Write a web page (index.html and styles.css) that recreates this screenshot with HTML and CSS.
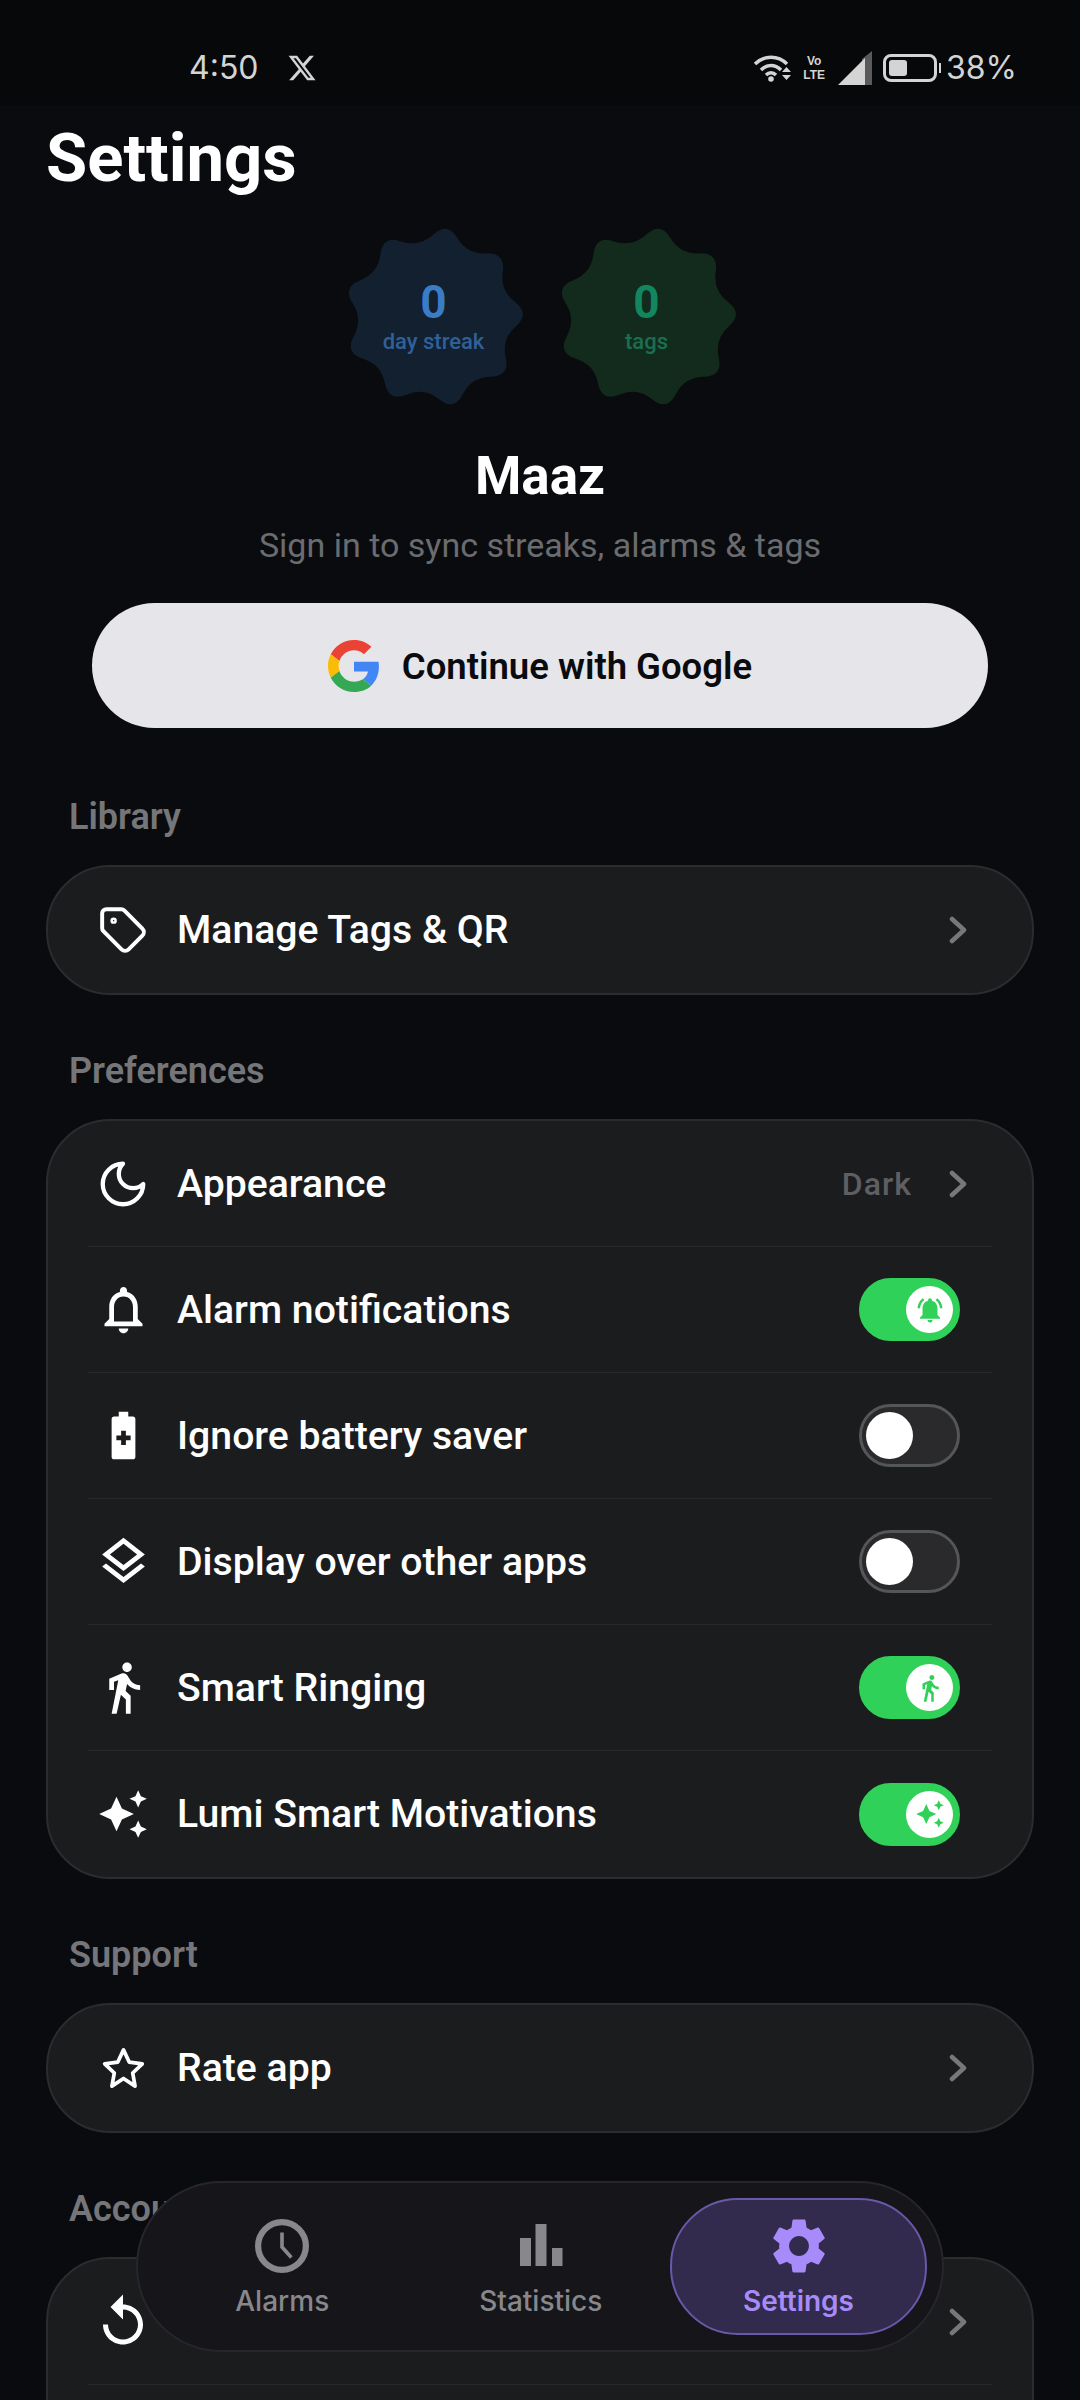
FILE: index.html
```html
<!DOCTYPE html>
<html lang="en">
<head>
    <meta charset="UTF-8">
    <meta name="viewport" content="width=device-width, initial-scale=1.0">
    <title>Settings</title>
    <link rel="stylesheet" href="styles.css">
</head>
<body>
    <div class="screen">
        <div class="status-bar">
            <div class="status-left">
                <span class="status-time">4:50</span>
                <svg class="status-x" viewBox="0 0 24 24"><path d="M18.244 2.25h3.308l-7.227 8.26 8.502 11.24H16.17l-5.214-6.817L4.99 21.75H1.68l7.73-8.835L1.254 2.25H8.08l4.713 6.231zm-1.161 17.52h1.833L7.084 4.126H5.117z"/></svg>
            </div>
            <div class="status-right">
                <svg class="status-wifi" viewBox="0 0 38 28">
                    <path class="wifi-arc" d="M2 10C11 1 25 1 34 10"/>
                    <path class="wifi-arc" d="M8 16C14 10 22 10 28 16"/>
                    <path class="wifi-arc" d="M13 21c3-3 7-3 10 0"/>
                    <circle class="wifi-dot" cx="18" cy="25" r="2.8"/>
                    <path class="wifi-dot" d="M29 18h9l-4.500-5zM29 21h9l-4.500 5z"/>
                </svg>
                <span class="status-volte">Vo<br>LTE</span>
                <svg class="status-signal" viewBox="0 0 34 34">
                    <path class="signal-back" d="M34 0v34H24V8z"/>
                    <path class="signal-front" d="M27 7v27H0z"/>
                </svg>
                <span class="status-battery"><span class="status-battery-fill"></span></span>
                <span class="status-percent">38%</span>
            </div>
        </div>

        <h1 class="page-title">Settings</h1>

        <div class="badges">
            <div class="badge badge-blue">
                <svg class="badge-shape" viewBox="0 0 200 200"><path d="M99.3 9.35Q114.8 -5 125.7 13.05Q136.6 31.1 157.7 30.1Q178.8 29.1 175.55 49.95Q172.3 70.8 189.1 83.55Q205.9 96.3 190.05 110.2Q174.2 124.1 178.85 144.7Q183.5 165.3 162.4 165.7Q141.3 166.1 131.65 184.9Q122 203.7 105.55 190.45Q89.1 177.2 69.65 185.4Q50.2 193.6 46.1 172.9Q42 152.2 21.85 145.95Q1.7 139.7 11.85 121.2Q22 102.7 10.6 84.95Q-0.8 67.2 18.85 59.6Q38.5 52 41.15 31.05Q43.8 10.1 63.8 16.9Q83.8 23.7 99.3 9.35Z"/></svg>
                <span class="badge-num">0</span>
                <span class="badge-label">day streak</span>
            </div>
            <div class="badge badge-green">
                <svg class="badge-shape" viewBox="0 0 200 200"><path d="M99.3 9.35Q114.8 -5 125.7 13.05Q136.6 31.1 157.7 30.1Q178.8 29.1 175.55 49.95Q172.3 70.8 189.1 83.55Q205.9 96.3 190.05 110.2Q174.2 124.1 178.85 144.7Q183.5 165.3 162.4 165.7Q141.3 166.1 131.65 184.9Q122 203.7 105.55 190.45Q89.1 177.2 69.65 185.4Q50.2 193.6 46.1 172.9Q42 152.2 21.85 145.95Q1.7 139.7 11.85 121.2Q22 102.7 10.6 84.95Q-0.8 67.2 18.85 59.6Q38.5 52 41.15 31.05Q43.8 10.1 63.8 16.9Q83.8 23.7 99.3 9.35Z"/></svg>
                <span class="badge-num">0</span>
                <span class="badge-label">tags</span>
            </div>
        </div>

        <div class="profile-name">Maaz</div>
        <div class="profile-sub">Sign in to sync streaks, alarms &amp; tags</div>

        <div class="google-btn">
            <svg class="google-logo" viewBox="0 0 48 48">
                <path fill="#ea4335" d="M24 9.500c3.540 0 6.710 1.220 9.210 3.600l6.850-6.850C35.900 2.380 30.470 0 24 0 14.620 0 6.510 5.380 2.560 13.220l7.980 6.190C12.430 13.720 17.740 9.500 24 9.500z"/>
                <path fill="#4285f4" d="M46.980 24.550c0-1.570-.15-3.090-.38-4.550H24v9.020h12.940c-.58 2.960-2.260 5.480-4.780 7.180l7.730 6c4.510-4.180 7.090-10.360 7.090-17.650z"/>
                <path fill="#fbbc05" d="M10.530 28.590c-.48-1.450-.76-2.990-.76-4.590s.27-3.140.76-4.590l-7.980-6.190C.92 16.460 0 20.120 0 24c0 3.880.92 7.540 2.560 10.780l7.970-6.190z"/>
                <path fill="#34a853" d="M24 48c6.480 0 11.930-2.130 15.890-5.810l-7.730-6c-2.150 1.450-4.920 2.300-8.160 2.300-6.260 0-11.570-4.220-13.470-9.910l-7.980 6.190C6.510 42.620 14.620 48 24 48z"/>
            </svg>
            <span>Continue with Google</span>
        </div>

        <div class="section-label section-library">Library</div>
        <div class="card">
            <div class="row">
                <span class="row-icon"><svg viewBox="0 0 24 24" class="icon-line"><path d="M12.586 2.586A2 2 0 0 0 11.172 2H4a2 2 0 0 0-2 2v7.172a2 2 0 0 0 .586 1.414l8.704 8.704a2.426 2.426 0 0 0 3.420 0l6.580-6.580a2.426 2.426 0 0 0 0-3.420z"/><circle cx="7.500" cy="7.500" r=".6"/></svg></span>
                <span class="row-text">Manage Tags &amp; QR</span>
                <svg class="chevron" viewBox="0 0 18 28"><path d="M3 3l12 11L3 25"/></svg>
            </div>
        </div>

        <div class="section-label">Preferences</div>
        <div class="card">
            <div class="row">
                <span class="row-icon"><svg viewBox="0 0 24 24" class="icon-line icon-moon"><path d="M12 3a6 6 0 0 0 9 9 9 9 0 1 1-9-9Z"/></svg></span>
                <span class="row-text">Appearance</span>
                <span class="row-value">Dark</span>
                <svg class="chevron" viewBox="0 0 18 28"><path d="M3 3l12 11L3 25"/></svg>
            </div>
            <div class="row">
                <span class="row-icon"><svg viewBox="0 0 24 24" class="icon-fill"><path d="M12 22c1.100 0 2-.9 2-2h-4c0 1.100.9 2 2 2zm6-6v-5c0-3.070-1.630-5.640-4.500-6.320V4c0-.83-.67-1.500-1.500-1.500s-1.500.67-1.500 1.500v.68C7.640 5.360 6 7.920 6 11v5l-2 2v1h16v-1l-2-2zm-2 1H8v-6c0-2.480 1.510-4.500 4-4.500s4 2.020 4 4.500v6z"/></svg></span>
                <span class="row-text">Alarm notifications</span>
                <span class="toggle toggle-on"><span class="knob"><svg viewBox="0 0 24 24"><path d="M7.580 4.080L6.150 2.650C3.750 4.480 2.170 7.300 2.030 10.500h2c.15-2.650 1.510-4.970 3.550-6.420zm12.390 6.420h2c-.15-3.200-1.730-6.020-4.120-7.850l-1.420 1.430c2.020 1.450 3.390 3.770 3.540 6.420zM18 11c0-3.070-1.640-5.640-4.500-6.320V4c0-.83-.67-1.500-1.500-1.500s-1.500.67-1.500 1.500v.68C7.630 5.360 6 7.920 6 11v5l-2 2v1h16v-1l-2-2v-5zm-6 11c.14 0 .27-.01.4-.04.65-.14 1.180-.58 1.440-1.180.1-.24.15-.5.15-.78h-4c.01 1.100.9 2 2.010 2z"/></svg></span></span>
            </div>
            <div class="row">
                <span class="row-icon"><svg viewBox="0 0 24 24" class="icon-fill"><path d="M16 4h-2V2h-4v2H8c-.55 0-1 .45-1 1v16c0 .55.45 1 1 1h8c.55 0 1-.45 1-1V5c0-.55-.45-1-1-1zm-1 10h-2v2h-2v-2H9v-2h2v-2h2v2h2v2z"/></svg></span>
                <span class="row-text">Ignore battery saver</span>
                <span class="toggle"><span class="knob"></span></span>
            </div>
            <div class="row">
                <span class="row-icon"><svg viewBox="0 0 24 24" class="icon-fill"><path d="M11.990 18.540l-7.370-5.730L3 14.070l9 7 9-7-1.630-1.270-7.380 5.740zM12 16l7.360-5.730L21 9l-9-7-9 7 1.630 1.270L12 16zm0-11.470L17.740 9 12 13.470 6.260 9 12 4.530z"/></svg></span>
                <span class="row-text">Display over other apps</span>
                <span class="toggle"><span class="knob"></span></span>
            </div>
            <div class="row">
                <span class="row-icon"><svg viewBox="0 0 24 24" class="icon-fill"><path d="M13.500 5.500c1.100 0 2-.9 2-2s-.9-2-2-2-2 .9-2 2 .9 2 2 2zM9.800 8.900L7 23h2.100l1.800-8 2.100 2v6h2v-7.500l-2.100-2 .6-3C14.800 12 16.800 13 19 13v-2c-1.900 0-3.500-1-4.300-2.400l-1-1.600c-.4-.6-1-1-1.700-1-.3 0-.5.1-.8.1L6 8.300V13h2V9.600l1.800-.7"/></svg></span>
                <span class="row-text">Smart Ringing</span>
                <span class="toggle toggle-on"><span class="knob"><svg viewBox="0 0 24 24"><path d="M13.500 5.500c1.100 0 2-.9 2-2s-.9-2-2-2-2 .9-2 2 .9 2 2 2zM9.800 8.900L7 23h2.100l1.800-8 2.100 2v6h2v-7.500l-2.100-2 .6-3C14.800 12 16.800 13 19 13v-2c-1.900 0-3.500-1-4.300-2.400l-1-1.600c-.4-.6-1-1-1.700-1-.3 0-.5.1-.8.1L6 8.300V13h2V9.600l1.800-.7"/></svg></span></span>
            </div>
            <div class="row">
                <span class="row-icon"><svg viewBox="0 0 24 24" class="icon-fill icon-sparkle"><path d="M19 9l1.250-2.750L23 5l-2.750-1.250L19 1l-1.250 2.750L15 5l2.750 1.250L19 9zm-7.500.5L9 4 6.500 9.500 1 12l5.500 2.500L9 20l2.500-5.500L17 12l-5.500-2.500zM19 15l-1.250 2.750L15 19l2.750 1.250L19 23l1.250-2.750L23 19l-2.750-1.250L19 15z"/></svg></span>
                <span class="row-text">Lumi Smart Motivations</span>
                <span class="toggle toggle-on"><span class="knob"><svg viewBox="0 0 24 24"><path d="M19 9l1.250-2.750L23 5l-2.750-1.250L19 1l-1.250 2.750L15 5l2.750 1.250L19 9zm-7.500.5L9 4 6.500 9.500 1 12l5.500 2.500L9 20l2.500-5.500L17 12l-5.500-2.500zM19 15l-1.250 2.750L15 19l2.750 1.250L19 23l1.250-2.750L23 19l-2.750-1.250L19 15z"/></svg></span></span>
            </div>
        </div>

        <div class="section-label">Support</div>
        <div class="card">
            <div class="row">
                <span class="row-icon"><svg viewBox="0 0 24 24" class="icon-line icon-star"><path d="M12 2.500l2.900 6.200 6.700.9-4.900 4.700 1.200 6.700L12 17.100l-5.900 3.900 1.200-6.700-4.900-4.700 6.700-.9z"/></svg></span>
                <span class="row-text">Rate app</span>
                <svg class="chevron" viewBox="0 0 18 28"><path d="M3 3l12 11L3 25"/></svg>
            </div>
        </div>

        <div class="section-label">Account</div>
        <div class="card">
            <div class="row">
                <span class="row-icon"><svg viewBox="0 0 24 24" class="icon-fill icon-replay"><path d="M12 5V1L7 6l5 5V7c3.310 0 6 2.690 6 6s-2.690 6-6 6-6-2.690-6-6H4c0 4.420 3.580 8 8 8s8-3.580 8-8-3.580-8-8-8z"/></svg></span>
                <span class="row-text"></span>
                <svg class="chevron" viewBox="0 0 18 28"><path d="M3 3l12 11L3 25"/></svg>
            </div>
            <div class="row"></div>
        </div>

        <!-- floating tab bar -->
        <div class="tab-bar">
            <div class="tab">
                <svg class="tab-icon" viewBox="0 0 52 52"><circle cx="26" cy="26" r="23" class="tab-line"/><path d="M26 13v14l9 10" class="tab-line tab-hand"/></svg>
                <span>Alarms</span>
            </div>
            <div class="tab">
                <svg class="tab-icon" viewBox="0 0 54 54"><path class="tab-bars" d="M6 19h11v28H6zM21.500 5h11v42h-11zM38 29h10.500v18H38z"/></svg>
                <span>Statistics</span>
            </div>
            <div class="tab tab-active">
                <svg class="tab-icon" viewBox="2.200 2.200 19.600 19.600"><path d="M19.140 12.940c.04-.3.06-.61.06-.94 0-.32-.02-.64-.07-.94l2.030-1.580c.18-.14.23-.41.12-.61l-1.920-3.320c-.12-.22-.37-.29-.59-.22l-2.390.96c-.5-.38-1.030-.7-1.620-.94l-.36-2.540c-.04-.24-.24-.41-.48-.41h-3.840c-.24 0-.43.17-.47.41l-.36 2.540c-.59.24-1.130.57-1.620.94l-2.390-.96c-.22-.08-.47 0-.59.22L2.740 8.870c-.12.21-.08.47.12.61l2.030 1.580c-.05.3-.09.63-.09.94s.02.64.07.94l-2.030 1.580c-.18.14-.23.41-.12.61l1.920 3.320c.12.22.37.29.59.22l2.390-.96c.5.38 1.030.7 1.620.94l.36 2.540c.05.24.24.41.48.41h3.840c.24 0 .44-.17.47-.41l.36-2.540c.59-.24 1.130-.56 1.620-.94l2.390.96c.22.08.47 0 .59-.22l1.920-3.320c.12-.22.07-.47-.12-.61l-2.010-1.580zM12 15.600c-1.980 0-3.600-1.620-3.600-3.600s1.620-3.600 3.600-3.600 3.600 1.620 3.600 3.600-1.620 3.600-3.600 3.600z"/></svg>
                <span>Settings</span>
            </div>
        </div>
    </div>
</body>
</html>
```

FILE: styles.css
```css
* {
    margin: 0;
    padding: 0;
    box-sizing: border-box;
}

html, body {
    width: 1080px;
    height: 2400px;
    overflow: hidden;
    background: #0a0b0e;
}

body {
    font-family: Roboto, "Noto Sans", sans-serif;
    color: #fff;
}

.screen {
    position: relative;
    width: 1080px;
    height: 2400px;
    overflow: hidden;
}

/* status bar */
.status-bar {
    height: 105px;
    background: #070809;
    display: flex;
    align-items: center;
    justify-content: space-between;
    padding: 30px 63px 0 189px;
    color: #d4d4d4;
    font-family: Inter, sans-serif;
}

.status-left, .status-right {
    display: flex;
    align-items: center;
}

.status-time {
    font-size: 32px;
    margin-right: 28px;
}

.status-x {
    width: 30px;
    height: 30px;
    fill: #d4d4d4;
}

.status-wifi {
    width: 38px;
    height: 30px;
    margin-right: 12px;
}

.wifi-arc {
    fill: none;
    stroke: #d4d4d4;
    stroke-width: 3.5;
}

.wifi-dot {
    fill: #d4d4d4;
}

.status-volte {
    font-size: 12px;
    line-height: 14px;
    font-weight: 800;
    text-align: center;
    margin-right: 13px;
    font-family: "Liberation Sans", sans-serif;
}

.status-signal {
    width: 34px;
    height: 34px;
    margin-right: 11px;
}

.signal-back {
    fill: #5a5a5a;
}

.signal-front {
    fill: #d4d4d4;
}

.status-battery {
    position: relative;
    width: 54px;
    height: 28px;
    border: 3px solid #d4d4d4;
    border-radius: 8px;
    padding: 3px;
    margin-right: 9px;
}

.status-battery::after {
    content: "";
    position: absolute;
    right: -7px;
    top: 6px;
    width: 2px;
    height: 10px;
    background: #d4d4d4;
}

.status-battery-fill {
    display: block;
    width: 18px;
    height: 100%;
    background: #d4d4d4;
    border-radius: 3px;
}

.status-percent {
    font-size: 32px;
}

/* header */
.page-title {
    font-size: 67px;
    font-weight: 700;
    line-height: 76px;
    margin: 15px 0 0 46px;
}

.badges {
    display: flex;
    justify-content: center;
    gap: 31px;
    margin-top: 30px;
}

.badge {
    position: relative;
    width: 182px;
    height: 182px;
    display: flex;
    flex-direction: column;
    align-items: center;
    justify-content: center;
}

.badge-shape {
    position: absolute;
    left: 0;
    top: 0;
    width: 100%;
    height: 100%;
}

.badge-num, .badge-label {
    position: relative;
}

.badge-num {
    font-size: 46px;
    line-height: 50px;
    font-weight: 700;
}

.badge-label {
    font-size: 22px;
    line-height: 30px;
    font-weight: 500;
}

.badge-blue .badge-shape { fill: #12202f; }
.badge-blue .badge-num { color: #3b7cc6; }
.badge-blue .badge-label { color: #2f6099; }

.badge-green .badge-shape { fill: #122b1c; }
.badge-green .badge-num { color: #12875f; }
.badge-green .badge-label { color: #1a6f50; }

.profile-name {
    text-align: center;
    font-size: 53px;
    font-weight: 700;
    line-height: 66px;
    margin-top: 35px;
}

.profile-sub {
    text-align: center;
    font-size: 34px;
    line-height: 40px;
    color: #6b6c70;
    margin-top: 16px;
}

.google-btn {
    display: flex;
    align-items: center;
    justify-content: center;
    gap: 22px;
    width: 896px;
    height: 125px;
    padding-top: 1px;
    margin: 38px 0 0 92px;
    background: #e5e5ea;
    border-radius: 63px;
    color: #0a0b0e;
    font-size: 36.500px;
    font-weight: 600;
}

.google-logo {
    width: 52px;
    height: 52px;
}

/* settings list */
.section-label {
    font-size: 36px;
    font-weight: 600;
    line-height: 40px;
    color: #75767a;
    margin: 56px 0 28px 69px;
}

.section-library {
    margin-top: 69px;
}

.card {
    width: 988px;
    margin-left: 46px;
    background: #1b1c1e;
    border: 2px solid #2b2c2f;
    border-radius: 64px;
    padding: 0 40px;
}

.row {
    display: flex;
    align-items: center;
    height: 126px;
    padding: 0 33px 0 14px;
    border-bottom: 1px solid #27282b;
}

.row:last-child {
    border-bottom: none;
}

.row-icon {
    display: flex;
    justify-content: center;
    width: 42px;
    flex: none;
    margin-right: 33px;
}

.row-icon svg {
    flex: none;
}

.icon-line {
    width: 50px;
    height: 50px;
    fill: none;
    stroke: #fff;
    stroke-width: 1.900;
    stroke-linejoin: round;
    stroke-linecap: round;
}

.icon-fill {
    width: 57px;
    height: 57px;
    fill: #fff;
}

.icon-moon {
    width: 54px;
    height: 54px;
}

.icon-star {
    width: 47px;
    height: 47px;
}

.icon-sparkle {
    width: 52px;
    height: 52px;
}

.icon-replay {
    width: 60px;
    height: 60px;
}

.row-text {
    flex: 1;
    font-size: 39.200px;
    font-weight: 500;
    color: #fff;
}

.row-value {
    font-size: 32px;
    font-weight: 500;
    letter-spacing: 1px;
    color: #5e5f63;
    margin-right: 37px;
}

.chevron {
    width: 18px;
    height: 28px;
    margin-right: -8px;
    fill: none;
    stroke: #77787c;
    stroke-width: 4.500;
    stroke-linecap: round;
    stroke-linejoin: round;
}

.toggle {
    display: flex;
    align-items: center;
    width: 101px;
    height: 63px;
    padding: 0 4px;
    background: #2a2a2c;
    border: 3px solid #55565a;
    border-radius: 32px;
    margin-right: -1px;
}

.knob {
    display: flex;
    align-items: center;
    justify-content: center;
    width: 47px;
    height: 47px;
    border-radius: 50%;
    background: #fff;
}

.knob svg {
    width: 30px;
    height: 30px;
    fill: #30d158;
}

.toggle-on {
    background: #30d158;
    border-color: #30d158;
    justify-content: flex-end;
}

/* tab bar */
.tab-bar {
    position: absolute;
    left: 136px;
    top: 2181px;
    width: 808px;
    height: 171px;
    display: flex;
    padding: 15px;
    background: #15151a;
    border: 2px solid #26262c;
    border-radius: 85px;
}

.tab {
    flex: 1;
    display: flex;
    flex-direction: column;
    align-items: center;
    justify-content: center;
    gap: 11px;
    padding-top: 3px;
    border-radius: 68px;
    font-size: 28px;
    font-weight: 500;
    color: #87878c;
    font-family: Inter, sans-serif;
}

.tab-icon {
    width: 54px;
    height: 54px;
}

.tab-line {
    fill: none;
    stroke: #87878c;
    stroke-width: 6;
}

.tab-hand {
    stroke-width: 3.500;
}

.tab-bars {
    fill: #87878c;
}

.tab-active {
    background: #332b4d;
    border: 2px solid #6a58a8;
    color: #a78bfa;
    font-weight: 600;
    flex: 0 0 257px;
}

.tab-active .tab-icon {
    fill: #a78bfa;
}
```
